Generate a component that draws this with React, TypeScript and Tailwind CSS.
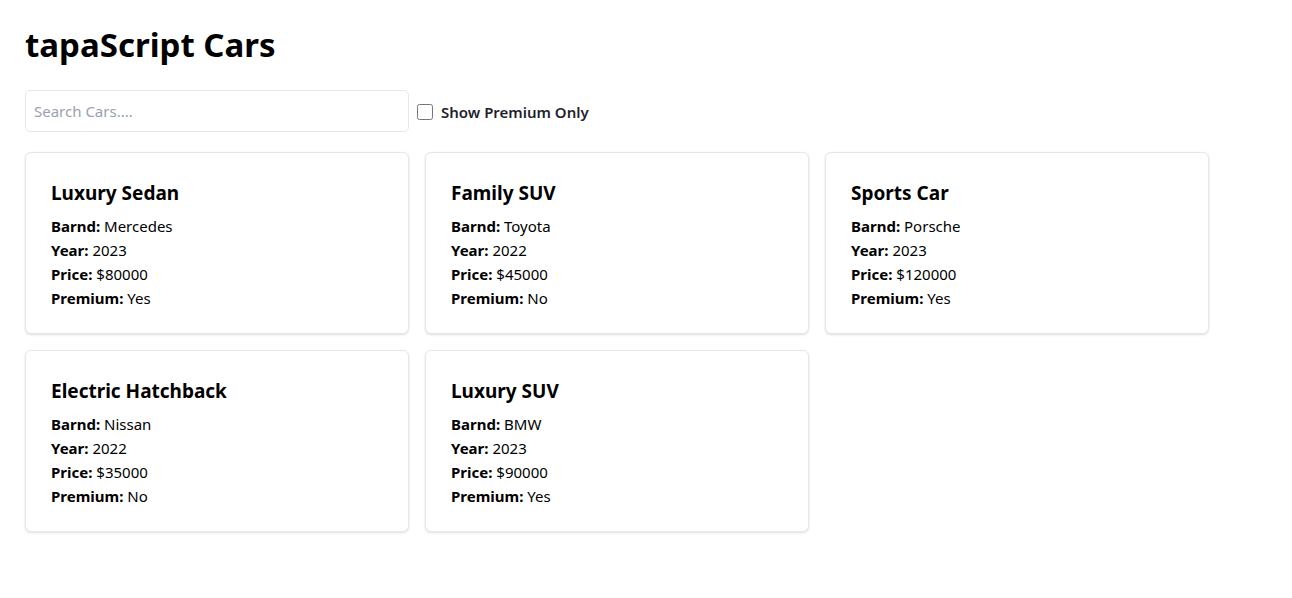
import { useState } from 'react';

interface Car {
  id: number;
  name: string;
  brand: string;
  year: number;
  price: number;
  premium: boolean;
}

const cars: Car[] = [
  { id: 1, name: 'Luxury Sedan', brand: 'Mercedes', year: 2023, price: 80000, premium: true },
  { id: 2, name: 'Family SUV', brand: 'Toyota', year: 2022, price: 45000, premium: false },
  { id: 3, name: 'Sports Car', brand: 'Porsche', year: 2023, price: 120000, premium: true },
  { id: 4, name: 'Electric Hatchback', brand: 'Nissan', year: 2022, price: 35000, premium: false },
  { id: 5, name: 'Luxury SUV', brand: 'BMW', year: 2023, price: 90000, premium: true },
];

const CarCard = ({ car }: { car: Car }) => (
  <div className="bg-white border border-gray-200 rounded-md shadow-sm px-[25px] pt-[24px] pb-[23px]">
    <h3 className="text-[19px] font-bold leading-[32px] mb-[5px]">{car.name}</h3>
    <p className="leading-6"><strong>Barnd:</strong> {car.brand}</p>
    <p className="leading-6"><strong>Year:</strong> {car.year}</p>
    <p className="leading-6"><strong>Price:</strong> ${car.price}</p>
    <p className="leading-6"><strong>Premium:</strong> {car.premium ? 'Yes' : 'No'}</p>
  </div>
);

export default function App() {
  const [search, setSearch] = useState('');
  const [premiumOnly, setPremiumOnly] = useState(false);

  const filtered = cars.filter(
    (c) =>
      c.name.toLowerCase().includes(search.toLowerCase()) &&
      (!premiumOnly || c.premium)
  );

  return (
    <div className="min-h-screen bg-white text-black px-[25px] pt-[26px] font-['Noto_Sans',sans-serif] text-[15px]">
      <h1 className="text-[33px] font-bold leading-[38px] mb-[26px]">tapaScript Cars</h1>

      <div className="flex items-center mb-[20px]">
        <input
          type="text"
          placeholder="Search Cars...."
          value={search}
          onChange={(e) => setSearch(e.target.value)}
          className="w-[384px] h-[42px] px-2 border border-gray-200 rounded-[5px] text-[15px] placeholder:text-gray-400 outline-none"
        />
        <label className="flex items-center ml-[8px] pt-[2px] font-semibold text-[15px] text-[#1f1f2e]">
          <input
            type="checkbox"
            checked={premiumOnly}
            onChange={(e) => setPremiumOnly(e.target.checked)}
            className="w-[16px] h-[16px] mr-[8px] accent-gray-500"
          />
          Show Premium Only
        </label>
      </div>

      <div className="grid grid-cols-[repeat(3,384px)] gap-4">
        {filtered.map((car) => (
          <CarCard key={car.id} car={car} />
        ))}
      </div>
    </div>
  );
}
